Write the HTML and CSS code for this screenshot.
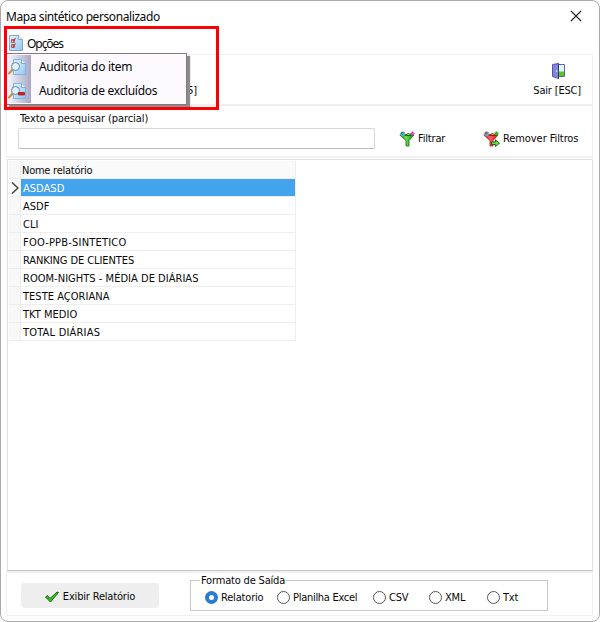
FILE: index.html
```html
<!DOCTYPE html>
<html lang="pt">
<head>
<meta charset="utf-8">
<title>Mapa sintético personalizado</title>
<link rel="stylesheet" href="styles.css">
</head>
<body>
<svg width="0" height="0" class="defs">
  <defs>
    <linearGradient id="page" x1="0" y1="0" x2="1" y2="1"><stop offset="0" stop-color="#e6f4ff"/><stop offset="1" stop-color="#8fc6f2"/></linearGradient>
    <linearGradient id="green" x1="0" x2="1"><stop offset="0" stop-color="#1a9c1a"/><stop offset=".45" stop-color="#6be04a"/><stop offset="1" stop-color="#108010"/></linearGradient>
    <linearGradient id="red" x1="0" x2="1"><stop offset="0" stop-color="#e01828"/><stop offset=".45" stop-color="#ff6058"/><stop offset="1" stop-color="#d01020"/></linearGradient>
    <symbol id="search-page" viewBox="0 0 18 18">
      <path d="M5.5 1.500h8l4 4v11h-12z" fill="url(#page)" stroke="#7cb2e2"/>
      <path d="M13.5 1.500v4h4" fill="#fff" stroke="#74a9dc"/>
      <path d="M4.500 11.500L1 15.500" stroke="#d08c3a" stroke-width="2" stroke-linecap="round"/>
      <circle cx="7.5" cy="8.500" r="4" fill="#dcf2ff" stroke="#6888a2" stroke-width="1"/>
      <path d="M5.6 8q.6-1.6 2-1.7" fill="none" stroke="#fff"/>
    </symbol>
    <symbol id="funnel" viewBox="0 0 16 16">
      <path d="M.8 4h14.200L10 9.500v5.500H7V9.500z" stroke-width=".8"/>
      <path d="M5 4.500L9.500 2.500 13 4.500z" fill="#f0c020"/>
      <circle cx="3.800" cy="3" r="2.300" fill="#61b9e4" stroke="#4796bf" stroke-width=".5"/>
      <circle cx="3.300" cy="2.300" r=".9" fill="#d9f5ff"/>
    </symbol>
  </defs>
</svg>
<div class="window">
  <header class="titlebar">
    <span class="title">Mapa sintético personalizado</span>
    <svg class="close" width="12" height="12" viewBox="0 0 12 12"><path d="M1 1l10 10M11 1L1 11" stroke="#222" stroke-width="1.1"/></svg>
  </header>
  <nav class="menubar">
    <svg width="14" height="16" viewBox="0 0 14 16">
      <path d="M.5.5h9l4 4v11H.5z" fill="url(#page)" stroke="#7ea8d2"/>
      <path d="M9.5.5v4h4" fill="#fff" stroke="#7ea8d2"/>
      <path d="M2.5 4.500h3v3h-3zM2.5 9.5h3v3h-3z" fill="#f3dada" stroke="#8b6870"/>
      <path d="M3.500 5l1 1 2-3M3.500 10.500l1 1 2-3" fill="none" stroke="#d83a26" stroke-width="1.2"/>
    </svg>
    <span class="menu-label">Opções</span>
    <div class="dropdown">
      <div class="entry"><span class="gutter"><svg width="18" height="18"><use href="#search-page"/></svg></span><span class="e1">Auditoria do item</span></div>
      <div class="entry"><span class="gutter"><svg width="18" height="18"><use href="#search-page"/><path d="M10.500 10.500h6v2.500h-6z" fill="#ee1410" stroke="#ac0d08" stroke-width=".7"/></svg></span><span class="e2">Auditoria de excluídos</span></div>
    </div>
    <div class="highlight"></div>
  </nav>
  <section class="toolbar">
    <span class="shortcut">[F5]</span>
    <div class="exit">
      <svg width="14" height="16" viewBox="0 0 14 16">
        <path d="M5.500 1.500h7v12h-7z" fill="#e4f8ff" stroke="#6262a6"/>
        <path d="M7 8.500h5V13H7z" fill="#52c820"/>
        <path d="M.5 1.500L6.500.5v15l-6-2z" fill="#8585df" stroke="#5656a3"/>
        <path d="M6.500.5v15" stroke="#353578"/>
        <path d="M4 7.500h1.300v1.300H4z" fill="#fff"/>
      </svg>
      <span class="exit-label">Sair [ESC]</span>
    </div>
  </section>
  <section class="filter">
    <div class="search"><label for="q">Texto a pesquisar (parcial)</label><input id="q" type="text"></div>
    <div class="action apply">
      <svg width="16" height="16"><use href="#funnel" fill="url(#green)" stroke="#107010"/><path d="M13.500 .5v4M11.500 2.500h4" stroke="#e52cdb" stroke-width="1.500"/></svg>
      <span>Filtrar</span>
    </div>
    <div class="action remove">
      <svg width="17" height="16"><use href="#funnel" width="16" height="16" fill="url(#red)" stroke="#b01018"/><path d="M13.500 .5v4M11.500 2.500h4" stroke="#20b61c" stroke-width="1.800"/><path d="M8.500 11h4V8.800l4 3.400-4 3.300v-2h-4z" fill="#76d34a" stroke="#145f10" stroke-width=".9"/></svg>
      <span>Remover Filtros</span>
    </div>
  </section>
  <main class="grid">
    <div class="row head"><span class="mark"></span><span class="cell">Nome relatório</span></div>
    <div class="row selected"><span class="mark"><svg width="8" height="12" viewBox="0 0 8 12"><path d="M1 .5L7 6l-6 5.500" fill="none" stroke="#444" stroke-width="1.500"/></svg></span><span class="cell">ASDASD</span></div>
    <div class="row"><span class="mark"></span><span class="cell">ASDF</span></div>
    <div class="row"><span class="mark"></span><span class="cell">CLI</span></div>
    <div class="row"><span class="mark"></span><span class="cell wide">FOO-PPB-SINTETICO</span></div>
    <div class="row"><span class="mark"></span><span class="cell tight">RANKING DE CLIENTES</span></div>
    <div class="row"><span class="mark"></span><span class="cell">ROOM-NIGHTS - MÉDIA DE DIÁRIAS</span></div>
    <div class="row"><span class="mark"></span><span class="cell">TESTE AÇORIANA</span></div>
    <div class="row"><span class="mark"></span><span class="cell">TKT MEDIO</span></div>
    <div class="row"><span class="mark"></span><span class="cell wide">TOTAL DIÁRIAS</span></div>
  </main>
  <footer class="footer">
    <button class="show" type="button">
      <svg width="14" height="12" viewBox="0 0 14 12"><path d="M.5 6l2-1.500L5 7.500 12 1l1.500.5L5.500 11z" fill="#35c020" stroke="#176a10"/></svg>
      <span>Exibir Relatório</span>
    </button>
    <div class="format">
      <span class="legend">Formato de Saída</span>
      <span class="option o1"><i class="radio on"></i><span>Relatorio</span></span>
      <span class="option o2"><i class="radio"></i><span>Planilha Excel</span></span>
      <span class="option o3"><i class="radio"></i><span>CSV</span></span>
      <span class="option o4"><i class="radio"></i><span>XML</span></span>
      <span class="option o5"><i class="radio"></i><span>Txt</span></span>
    </div>
  </footer>
</div>
</body>
</html>
```
FILE: styles.css
```css
* { box-sizing: border-box; }
body {
  margin: 0;
  background: #fff;
  color: #080808;
  font: 11px/16px "DejaVu Sans Condensed", "DejaVu Sans", sans-serif;
  font-stretch: condensed;
  letter-spacing: -0.18px;
  white-space: nowrap;
}
svg { display: block; flex: none; }
.defs { position: absolute; }
.window {
  width: 600px;
  height: 622px;
  padding: 0 6px 5px 5px;
  border: 1px solid #aaa;
  border-radius: 8px;
  display: flex;
  flex-direction: column;
}
.titlebar { height: 33px; display: flex; justify-content: space-between; padding: 9px 11px 0 0; }
.title { font: 12px/14px "Noto Sans", sans-serif; letter-spacing: -0.41px; }
.menubar { position: relative; height: 20px; display: flex; padding: 1px 0 0 3px; }
.menu-label { margin: 1px 0 0 4px; font: 12px/16px "Noto Sans", sans-serif; letter-spacing: -1.05px; }
.dropdown {
  position: absolute;
  z-index: 2;
  left: 0;
  top: 19px;
  width: 181px;
  height: 52px;
  padding: 1px;
  background: #fcf9ff;
  border: 1px solid #8b7778;
  box-shadow: 3px 3px 1px #8c8c8c;
}
.entry { height: 24px; display: flex; align-items: center; font: 12px/16px "Noto Sans", sans-serif; letter-spacing: -0.3px; }
.gutter { width: 23px; height: 24px; margin-right: 8px; display: flex; align-items: center; background: linear-gradient(90deg, #f5f4fb, #a9a8c4); }
.highlight { position: absolute; z-index: 3; left: -2px; top: -8px; width: 215px; height: 84px; border: 3px solid #fb0007; }
.toolbar { height: 52px; border: solid #f0f0f0; border-width: 1px 1px 2px; display: flex; justify-content: space-between; padding: 8px 11px 0 171px; }
.shortcut { padding-top: 20px; }
.exit { display: flex; flex-direction: column; align-items: center; gap: 4px; }
.exit svg { margin-left: 3px; }
.filter { height: 52px; border: solid #f0f0f0; border-width: 0 1px 2px; display: flex; padding: 5px 0 0 11px; }
.search { width: 357px; display: flex; flex-direction: column; gap: 1px; }
.search label { padding-left: 2px; letter-spacing: -0.08px; }
.search input { width: 357px; height: 21px; border: 1px solid #d7d7d7; border-bottom-color: #bbb; border-radius: 2px; padding: 0 4px; font: inherit; background: #fff; }
.action { display: flex; height: 16px; margin-top: 20px; gap: 3px; }
.apply { width: 84px; margin-left: 24px; }
.remove { letter-spacing: -0.08px; }
.grid { height: 412px; margin: 1px 0 0 1px; padding: 1px; border: 1px solid #e0e0e0; border-bottom: 1px solid #c5c5c5; letter-spacing: 0.03px; }
.row { width: 287px; height: 18px; display: flex; }
.mark { width: 12px; background: #f8f8f8; border: solid #ededed; border-width: 0 1px 1px 0; display: flex; align-items: center; padding-left: 2px; }
.cell { width: 275px; padding-left: 2px; border: solid #eee; border-width: 0 1px 1px 0; line-height: 20px; }
.wide { letter-spacing: 0.2px; }
.tight { letter-spacing: -0.09px; }
.head .cell { background: #fafafa; padding-left: 1px; letter-spacing: -0.25px; }
.selected .cell { background: #43a3ed; color: #fff; }
.footer { height: 45px; border: solid #f0f0f0; border-width: 2px 1px 1px; display: flex; padding: 10px 0 0 14px; }
.show { width: 138px; height: 25px; border: 0; border-radius: 4px; background: #eee; font: inherit; letter-spacing: inherit; color: inherit; display: flex; align-items: center; justify-content: center; gap: 4px; padding: 2px 0 0; }
.format { position: relative; width: 358px; height: 31px; margin: -3px 0 0 31px; border: 1px solid #c8c8c8; display: flex; align-items: center; padding: 4px 0 0 14px; }
.legend { position: absolute; left: 9px; top: -8px; padding: 0 1px; background: #fff; line-height: 15px; }
.option { display: flex; align-items: center; gap: 3px; }
.option span { padding-top: 1px; }
.radio { width: 13px; height: 13px; border: 1px solid #555; border-radius: 50%; flex: none; }
.radio.on { border: 4px solid #2b7bd4; }
.o1 { width: 72px; }
.o2 { width: 96px; letter-spacing: -0.28px; }
.o3 { width: 56px; }
.o4 { width: 58px; }
```
